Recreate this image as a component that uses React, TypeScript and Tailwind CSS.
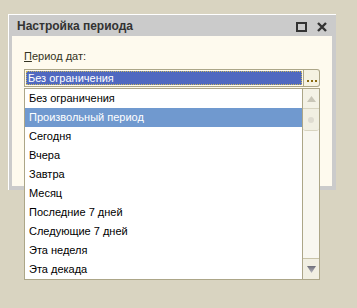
import React from 'react';

const items = [
  'Без ограничения',
  'Произвольный период',
  'Сегодня',
  'Вчера',
  'Завтра',
  'Месяц',
  'Последние 7 дней',
  'Следующие 7 дней',
  'Эта неделя',
  'Эта декада',
];

function TitleButtons() {
  return (
    <div className="flex items-center gap-[10px] pr-[5px] pt-[2px]">
      <svg width="11" height="10" viewBox="0 0 11 10">
        <rect x="1" y="1" width="9" height="8" fill="none" stroke="#333" strokeWidth="2" />
      </svg>
      <svg width="10" height="10" viewBox="0 0 10 10">
        <path d="M1 1 L9 9 M9 1 L1 9" stroke="#333" strokeWidth="2.4" />
      </svg>
    </div>
  );
}

function Dropdown() {
  return (
    <div className="absolute left-[24px] top-[88px] w-[296px] h-[192px] flex border border-[#aca688] bg-white">
      <div className="flex-1 flex flex-col">
        {items.map((t, i) => (
          <div
            key={t}
            className={
              'h-[19px] leading-[19px] pl-[4px] text-[11px] ' +
              (i === 1 ? 'bg-[#7099cf] text-white' : 'text-black')
            }
          >
            {t}
          </div>
        ))}
      </div>
      <div className="w-[17px] flex flex-col border-l border-[#aca688] bg-[#f8f7f0]">
        <div className="h-[20px] flex items-center justify-center border-b border-[#d8d4c0] bg-[#f4f2e6]">
          <svg width="9" height="6" viewBox="0 0 9 6">
            <path d="M4.5 0 L9 6 L0 6 Z" fill="#c9c6b8" />
          </svg>
        </div>
        <div className="h-[22px] flex items-center justify-center rounded-b-[3px] bg-[#f1efe2] border-b border-[#d8d4c0]">
          <div className="w-[6px] h-[6px] rounded-full bg-[#dedbd0]" />
        </div>
        <div className="flex-1" />
        <div className="h-[21px] flex items-center justify-center border-t border-[#c8c3a8] bg-[#f1efe2]">
          <svg width="9" height="7" viewBox="0 0 9 7">
            <defs>
              <linearGradient id="g" x1="0" y1="0" x2="0" y2="1">
                <stop offset="0" stopColor="#6e6e78" />
                <stop offset="1" stopColor="#b8b8c0" />
              </linearGradient>
            </defs>
            <path d="M0 0 L9 0 L4.5 7 Z" fill="url(#g)" />
          </svg>
        </div>
      </div>
    </div>
  );
}

export default function App() {
  return (
    <div
      className="relative w-[357px] h-[308px] bg-[#d9d4c1] pt-[14px] pl-[8px] overflow-hidden"
      style={{ fontFamily: '"Liberation Sans", Arial, sans-serif' }}
    >
      <div className="w-[328px] h-[176px] flex flex-col border-t border-l border-white bg-[#cbcbcb] pl-[3px] pb-[4px] pr-[4px]">
        <div className="h-[21px] flex items-center justify-between">
          <span className="pl-[5px] text-[12px] font-bold text-[#333333]">Настройка периода</span>
          <TitleButtons />
        </div>
        <div className="flex-1 bg-[#fefaee] pl-[12px] pt-[13px]">
          <div className="text-[11px] text-[#333322] leading-[14px]">
            <span className="underline">П</span>ериод дат:
          </div>
          <div className="mt-[6px] flex h-[18px] w-[296px]">
            <div className="flex-1 border border-[#aca688] p-px">
              <div className="h-full bg-[#5069c0] border border-dotted border-[#c8b860] text-white text-[11px] leading-[13px] pl-[1px]">
                Без ограничения
              </div>
            </div>
            <div className="w-[16px] border border-l-0 border-[#aca688] rounded-r-[3px] bg-[#f5f2e2] flex items-end justify-center pb-[4px] gap-[2px]">
              <span className="w-[2px] h-[2px] bg-[#8a6a10]" />
              <span className="w-[2px] h-[2px] bg-[#8a6a10]" />
              <span className="w-[2px] h-[2px] bg-[#8a6a10]" />
            </div>
          </div>
        </div>
      </div>
      <Dropdown />
    </div>
  );
}
